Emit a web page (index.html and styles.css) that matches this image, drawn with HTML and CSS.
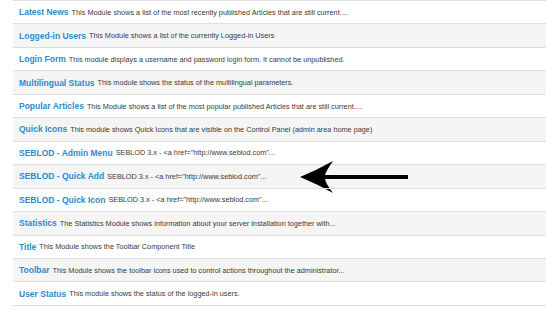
FILE: index.html
```html
<!DOCTYPE html>
<html lang="en">
<head>
	<meta charset="UTF-8">
	<title>Modules</title>
	<link rel="stylesheet" href="styles.css">
</head>
<body>
	<ul class="modlist">
		<li><a href="#">Latest News</a> <span>This Module shows a list of the most recently published Articles that are still current....</span></li>
		<li><a href="#">Logged-in Users</a> <span>This Module shows a list of the currently Logged-in Users</span></li>
		<li><a href="#">Login Form</a> <span>This module displays a username and password login form. It cannot be unpublished.</span></li>
		<li><a href="#">Multilingual Status</a> <span>This module shows the status of the multilingual parameters.</span></li>
		<li><a href="#">Popular Articles</a> <span>This Module shows a list of the most popular published Articles that are still current....</span></li>
		<li><a href="#">Quick Icons</a> <span>This module shows Quick Icons that are visible on the Control Panel (admin area home page)</span></li>
		<li><a href="#">SEBLOD - Admin Menu</a> <span>SEBLOD 3.x - &lt;a href="http://www.seblod.com"...</span></li>
		<li class="marked"><a href="#">SEBLOD - Quick Add</a> <span>SEBLOD 3.x - &lt;a href="http://www.seblod.com"...</span>
			<svg class="pointer" width="112" height="40" viewBox="0 0 112 40">
				<path d="M1 19 Q18 12 34 3 Q27 13 26 17 L109 17 L109 21 L26 21 Q27 26 34 35 Q18 26 1 19 Z" fill="#000"/>
			</svg>
		</li>
		<li><a href="#">SEBLOD - Quick Icon</a> <span>SEBLOD 3.x - &lt;a href="http://www.seblod.com"...</span></li>
		<li><a href="#">Statistics</a> <span>The Statistics Module shows information about your server installation together with...</span></li>
		<li><a href="#">Title</a> <span>This Module shows the Toolbar Component Title</span></li>
		<li><a href="#">Toolbar</a> <span>This Module shows the toolbar icons used to control actions throughout the administrator...</span></li>
		<li><a href="#">User Status</a> <span>This module shows the status of the logged-in users.</span></li>
	</ul>
</body>
</html>
```

FILE: styles.css
```css
*{
	box-sizing: border-box;
	margin: 0;
	padding: 0;
}
body{
	background: #fff;
	font-family: 'Liberation Sans', Arial, sans-serif;
	padding-left: 13px;
}
.modlist{
	list-style: none;
	border-bottom: 1px solid #ddd;
}
.modlist li{
	position: relative;
	display: flex;
	align-items: center;
	gap: 3px;
	height: 23.46px;
	padding-left: 6px;
	border-top: 1px solid #ddd;
	white-space: nowrap;
}
.modlist li:nth-child(even){
	background: #f5f5f5;
}
.modlist a{
	color: #2d8bcd;
	font-weight: bold;
	font-size: 8.5px;
	text-decoration: none;
}
.modlist span{
	color: #3a3a3a;
	font-size: 7.3px;
}
/* arrow drawn over the row */
.pointer{
	position: absolute;
	left: 286px;
	top: -7px;
}
```
